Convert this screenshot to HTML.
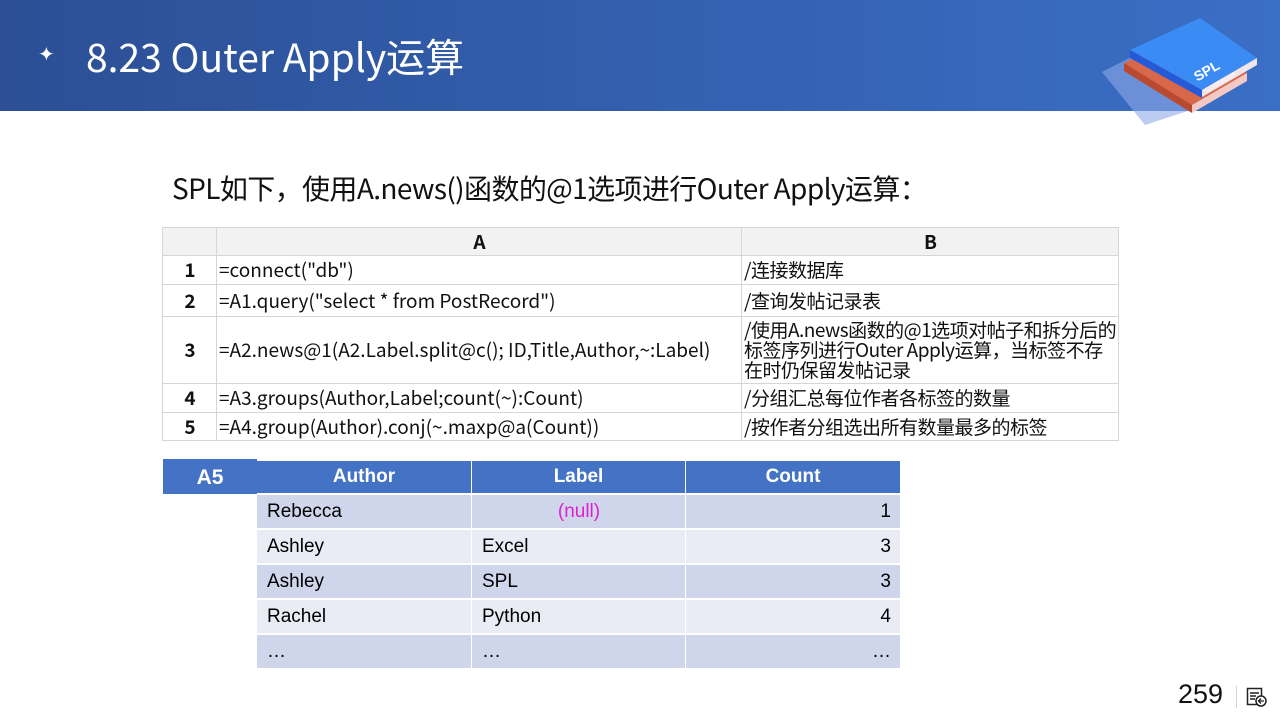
<!DOCTYPE html>
<html><head><meta charset="utf-8"><style>
body{margin:0;width:1280px;height:720px;position:relative;background:#fff;font-family:"Liberation Sans","Noto Sans CJK SC",sans-serif;overflow:hidden}
.hdr{position:absolute;left:0;top:0;width:1280px;height:111px;background:linear-gradient(90deg,#2c4f95 0%,#335fae 50%,#3a6fc6 100%)}
.title{position:absolute;left:86px;top:28px;color:#fff;font-size:39px;font-family:"Noto Sans CJK SC","Liberation Sans",sans-serif;letter-spacing:0px}
.star{position:absolute;left:38px;top:42px;color:#fff;font-size:20px}
.sub{position:absolute;left:172px;top:168px;font-size:28px;color:#111;font-family:"Noto Sans CJK SC",sans-serif;letter-spacing:-0.6px}
table{border-collapse:collapse;position:absolute}
.code{left:162px;top:227px;font-size:19px;font-family:"Noto Sans CJK SC",sans-serif;color:#111;table-layout:fixed}
.code td{border:1px solid #d6d6d6;padding:0 1px 0 2px;line-height:20px;white-space:nowrap;overflow:hidden}
.code td.b{white-space:normal;font-size:19px;letter-spacing:-0.5px}
.code tr.h td{background:#f2f2f2;font-weight:bold;text-align:center}
.code td.n{text-align:center;font-weight:bold}
.res{left:256px;top:459px;border-collapse:separate;border-spacing:1px 2px;font-size:19px;table-layout:fixed}
.res th{background:#4472c4;color:#fff;height:32px;font-weight:bold;padding:0}
.res td{height:33px;padding:0 9px 0 10px}
.o td{background:#cfd5ea}.e td{background:#e9ebf5}
.r{text-align:right}
</style></head><body>
<div class="hdr"></div>
<div class="star">✦</div>
<div class="title">8.23 Outer Apply运算</div>
<svg style="position:absolute;left:1100px;top:15px" width="160" height="110" viewBox="0 0 160 110">
<polygon points="2,57 55,30 100,92 45,110" fill="#8fa9e8" opacity="0.6"/>
<polygon points="24,48 90,18 147,58 92,90" fill="#d9674a"/>
<polygon points="24,48 92,90 92,98 24,56" fill="#b94a30"/>
<polygon points="92,90 147,58 147,66 92,98" fill="#f4c9c4"/>
<polygon points="30,35 100,3 157,43 102,75" fill="#3b8bf5"/>
<polygon points="30,35 102,75 102,83 30,43" fill="#2459d8"/>
<polygon points="102,75 157,43 157,50 102,82" fill="#f0e6ea"/>
<text x="95" y="62" fill="#fff" font-size="14" font-weight="bold" transform="rotate(-30 105 60)" font-family="Liberation Sans">SPL</text>
<text x="104" y="72" fill="#fff" font-size="6" transform="rotate(-30 115 70)" font-family="Liberation Sans">COOKBOOK</text>
</svg>
<div class="sub">SPL如下，使用A.news()函数的@1选项进行Outer Apply运算：</div>
<table class="code">
<colgroup><col style="width:54px"><col style="width:525px"><col style="width:377px"></colgroup>
<tr class="h" style="height:28px"><td></td><td>A</td><td>B</td></tr>
<tr style="height:29px"><td class="n">1</td><td>=connect("db")</td><td class="b">/连接数据库</td></tr>
<tr style="height:32px"><td class="n">2</td><td>=A1.query("select * from PostRecord")</td><td class="b">/查询发帖记录表</td></tr>
<tr style="height:67px"><td class="n">3</td><td>=A2.news@1(A2.Label.split@c(); ID,Title,Author,~:Label)</td><td class="b">/使用A.news函数的@1选项对帖子和拆分后的标签序列进行Outer Apply运算，当标签不存在时仍保留发帖记录</td></tr>
<tr style="height:29px"><td class="n">4</td><td>=A3.groups(Author,Label;count(~):Count)</td><td class="b">/分组汇总每位作者各标签的数量</td></tr>
<tr style="height:28px"><td class="n">5</td><td>=A4.group(Author).conj(~.maxp@a(Count))</td><td class="b">/按作者分组选出所有数量最多的标签</td></tr>
</table>
<div style="position:absolute;left:163px;top:459px;width:94px;height:35px;background:#4472c4;color:#fff;font-weight:bold;font-size:21px;text-align:center;line-height:37px">A5</div>
<table class="res">
<colgroup><col style="width:214px"><col style="width:213px"><col style="width:214px"></colgroup>
<tr><th>Author</th><th>Label</th><th>Count</th></tr>
<tr class="o"><td>Rebecca</td><td style="text-align:center;color:#e020d0">(null)</td><td class="r">1</td></tr>
<tr class="e"><td>Ashley</td><td>Excel</td><td class="r">3</td></tr>
<tr class="o"><td>Ashley</td><td>SPL</td><td class="r">3</td></tr>
<tr class="e"><td>Rachel</td><td>Python</td><td class="r">4</td></tr>
<tr class="o"><td>…</td><td>…</td><td class="r">…</td></tr>
</table>
<div style="position:absolute;left:1178px;top:679px;font-size:27px;color:#111">259</div>
<div style="position:absolute;left:1236px;top:686px;width:1px;height:22px;background:#c8d4ea"></div>
<svg style="position:absolute;left:1246px;top:686px" width="22" height="22" viewBox="0 0 22 22"><rect x="1.5" y="2.5" width="14" height="16" fill="none" stroke="#222" stroke-width="1.5"/><path d="M4 7h9M4 10h6M4 13h5" stroke="#222" stroke-width="1.5"/><circle cx="15" cy="15" r="5" fill="#fff" stroke="#222" stroke-width="1.5"/><path d="M18 15h-5M15 12.5l-2.5 2.5 2.5 2.5" stroke="#222" stroke-width="1.3" fill="none"/></svg>
</body></html>
